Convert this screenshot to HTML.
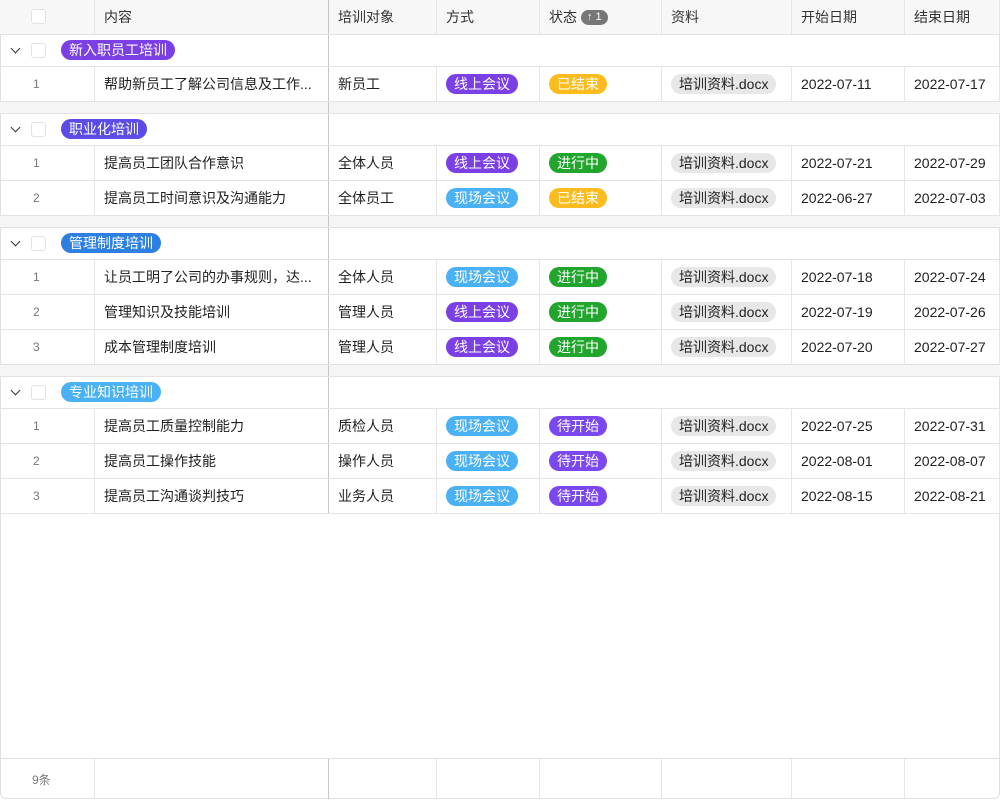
<!DOCTYPE html><html><head><meta charset="utf-8"><style>
*{box-sizing:border-box;margin:0;padding:0}
body{width:1000px;height:800px;background:#fff;font-family:"Liberation Sans","Noto Sans CJK SC",sans-serif;font-size:14px;color:#1f1f1f;position:relative;overflow:hidden}
.frame{position:absolute;left:0;top:0;width:1000px;height:799px;border:1px solid #e0e0e0;border-radius:0 0 6px 6px}
.r{position:absolute;left:0;width:1000px;border-bottom:1px solid #e3e3e3}
.c{position:absolute;top:0;height:100%;border-right:1px solid #e6e6e6;display:flex;align-items:center;padding-left:9px;white-space:nowrap;overflow:hidden}
.fz{border-right:1px solid #c6c6c6}
.h{background:#f7f7f7;height:35px;top:0;color:#333}
.d{height:35px}
.g{height:32px}
.gap{height:12px;background:#f5f5f5}
.cb{width:15px;height:15px;border:1px solid #e2e2e2;border-radius:3px;background:#fff;position:absolute}
.idx{padding-left:33px;color:#777;font-size:12px}
.t{display:inline-block;height:20px;line-height:20px;border-radius:10px;padding:0 8px;color:#fff;font-size:14px}
.p{background:#7b3fe6}.b{background:#4ab1f5}.gr{background:#22a52c}.y{background:#fcbc1f}.v{background:#7b48f0}
.f{background:#e7e7e7;color:#222}
.arr{position:absolute;left:12px;width:7px;height:7px;border-right:1.6px solid #333;border-bottom:1.6px solid #333;transform:rotate(45deg)}
</style></head><body>
<div class="frame"></div>

<div class="r h"><div class="c" style="left:0;width:95px"><span class="cb" style="left:31px;top:9px"></span></div><div class="c fz" style="left:95px;width:234px">内容</div><div class="c" style="left:329px;width:108px">培训对象</div><div class="c" style="left:437px;width:103px">方式</div><div class="c" style="left:540px;width:122px">状态<span style="margin-left:4px;background:#777;color:#fff;font-size:11px;border-radius:8px;padding:0 6px;height:15px;line-height:15px">↑ 1</span></div><div class="c" style="left:662px;width:130px">资料</div><div class="c" style="left:792px;width:113px">开始日期</div><div class="c" style="left:905px;width:95px">结束日期</div></div>

<div class="r g" style="top:35px"><span class="arr" style="top:10px"></span><span class="cb" style="left:31px;top:8px"></span><span class="t p" style="position:absolute;left:61px;top:5px">新入职员工培训</span><div class="c fz" style="left:0;width:329px;padding:0"></div></div>
<div class="r d" style="top:67px"><div class="c idx" style="left:0;width:95px">1</div><div class="c fz" style="left:95px;width:234px">帮助新员工了解公司信息及工作...</div><div class="c" style="left:329px;width:108px">新员工</div><div class="c" style="left:437px;width:103px"><span class="t p">线上会议</span></div><div class="c" style="left:540px;width:122px"><span class="t y">已结束</span></div><div class="c" style="left:662px;width:130px"><span class="t f">培训资料.docx</span></div><div class="c" style="left:792px;width:113px">2022-07-11</div><div class="c" style="left:905px;width:95px">2022-07-17</div></div>
<div class="r gap" style="top:102px"><div class="c fz" style="left:0;width:329px"></div></div>

<div class="r g" style="top:114px"><span class="arr" style="top:10px"></span><span class="cb" style="left:31px;top:8px"></span><span class="t" style="background:#5b4ce6;position:absolute;left:61px;top:5px">职业化培训</span><div class="c fz" style="left:0;width:329px;padding:0"></div></div>
<div class="r d" style="top:146px"><div class="c idx" style="left:0;width:95px">1</div><div class="c fz" style="left:95px;width:234px">提高员工团队合作意识</div><div class="c" style="left:329px;width:108px">全体人员</div><div class="c" style="left:437px;width:103px"><span class="t p">线上会议</span></div><div class="c" style="left:540px;width:122px"><span class="t gr">进行中</span></div><div class="c" style="left:662px;width:130px"><span class="t f">培训资料.docx</span></div><div class="c" style="left:792px;width:113px">2022-07-21</div><div class="c" style="left:905px;width:95px">2022-07-29</div></div>
<div class="r d" style="top:181px"><div class="c idx" style="left:0;width:95px">2</div><div class="c fz" style="left:95px;width:234px">提高员工时间意识及沟通能力</div><div class="c" style="left:329px;width:108px">全体员工</div><div class="c" style="left:437px;width:103px"><span class="t b">现场会议</span></div><div class="c" style="left:540px;width:122px"><span class="t y">已结束</span></div><div class="c" style="left:662px;width:130px"><span class="t f">培训资料.docx</span></div><div class="c" style="left:792px;width:113px">2022-06-27</div><div class="c" style="left:905px;width:95px">2022-07-03</div></div>
<div class="r gap" style="top:216px"><div class="c fz" style="left:0;width:329px"></div></div>

<div class="r g" style="top:228px"><span class="arr" style="top:10px"></span><span class="cb" style="left:31px;top:8px"></span><span class="t" style="background:#2e7fe2;position:absolute;left:61px;top:5px">管理制度培训</span><div class="c fz" style="left:0;width:329px;padding:0"></div></div>
<div class="r d" style="top:260px"><div class="c idx" style="left:0;width:95px">1</div><div class="c fz" style="left:95px;width:234px">让员工明了公司的办事规则，达...</div><div class="c" style="left:329px;width:108px">全体人员</div><div class="c" style="left:437px;width:103px"><span class="t b">现场会议</span></div><div class="c" style="left:540px;width:122px"><span class="t gr">进行中</span></div><div class="c" style="left:662px;width:130px"><span class="t f">培训资料.docx</span></div><div class="c" style="left:792px;width:113px">2022-07-18</div><div class="c" style="left:905px;width:95px">2022-07-24</div></div>
<div class="r d" style="top:295px"><div class="c idx" style="left:0;width:95px">2</div><div class="c fz" style="left:95px;width:234px">管理知识及技能培训</div><div class="c" style="left:329px;width:108px">管理人员</div><div class="c" style="left:437px;width:103px"><span class="t p">线上会议</span></div><div class="c" style="left:540px;width:122px"><span class="t gr">进行中</span></div><div class="c" style="left:662px;width:130px"><span class="t f">培训资料.docx</span></div><div class="c" style="left:792px;width:113px">2022-07-19</div><div class="c" style="left:905px;width:95px">2022-07-26</div></div>
<div class="r d" style="top:330px"><div class="c idx" style="left:0;width:95px">3</div><div class="c fz" style="left:95px;width:234px">成本管理制度培训</div><div class="c" style="left:329px;width:108px">管理人员</div><div class="c" style="left:437px;width:103px"><span class="t p">线上会议</span></div><div class="c" style="left:540px;width:122px"><span class="t gr">进行中</span></div><div class="c" style="left:662px;width:130px"><span class="t f">培训资料.docx</span></div><div class="c" style="left:792px;width:113px">2022-07-20</div><div class="c" style="left:905px;width:95px">2022-07-27</div></div>
<div class="r gap" style="top:365px"><div class="c fz" style="left:0;width:329px"></div></div>

<div class="r g" style="top:377px"><span class="arr" style="top:10px"></span><span class="cb" style="left:31px;top:8px"></span><span class="t b" style="position:absolute;left:61px;top:5px">专业知识培训</span><div class="c fz" style="left:0;width:329px;padding:0"></div></div>
<div class="r d" style="top:409px"><div class="c idx" style="left:0;width:95px">1</div><div class="c fz" style="left:95px;width:234px">提高员工质量控制能力</div><div class="c" style="left:329px;width:108px">质检人员</div><div class="c" style="left:437px;width:103px"><span class="t b">现场会议</span></div><div class="c" style="left:540px;width:122px"><span class="t v">待开始</span></div><div class="c" style="left:662px;width:130px"><span class="t f">培训资料.docx</span></div><div class="c" style="left:792px;width:113px">2022-07-25</div><div class="c" style="left:905px;width:95px">2022-07-31</div></div>
<div class="r d" style="top:444px"><div class="c idx" style="left:0;width:95px">2</div><div class="c fz" style="left:95px;width:234px">提高员工操作技能</div><div class="c" style="left:329px;width:108px">操作人员</div><div class="c" style="left:437px;width:103px"><span class="t b">现场会议</span></div><div class="c" style="left:540px;width:122px"><span class="t v">待开始</span></div><div class="c" style="left:662px;width:130px"><span class="t f">培训资料.docx</span></div><div class="c" style="left:792px;width:113px">2022-08-01</div><div class="c" style="left:905px;width:95px">2022-08-07</div></div>
<div class="r d" style="top:479px"><div class="c idx" style="left:0;width:95px">3</div><div class="c fz" style="left:95px;width:234px">提高员工沟通谈判技巧</div><div class="c" style="left:329px;width:108px">业务人员</div><div class="c" style="left:437px;width:103px"><span class="t b">现场会议</span></div><div class="c" style="left:540px;width:122px"><span class="t v">待开始</span></div><div class="c" style="left:662px;width:130px"><span class="t f">培训资料.docx</span></div><div class="c" style="left:792px;width:113px">2022-08-15</div><div class="c" style="left:905px;width:95px">2022-08-21</div></div>

<div class="r" style="top:758px;height:41px;border-top:1px solid #e0e0e0;border-bottom:none"><div class="c idx" style="left:0;width:95px;font-size:12px;padding-left:32px">9条</div><div class="c fz" style="left:95px;width:234px"></div><div class="c" style="left:329px;width:108px"></div><div class="c" style="left:437px;width:103px"></div><div class="c" style="left:540px;width:122px"></div><div class="c" style="left:662px;width:130px"></div><div class="c" style="left:792px;width:113px"></div></div>
</body></html>
